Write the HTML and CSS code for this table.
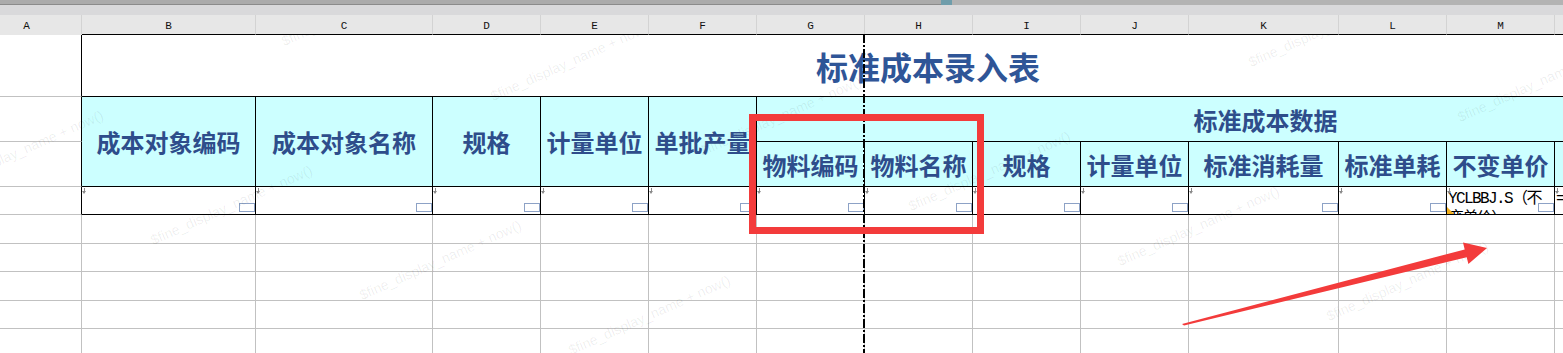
FILE: index.html
```html
<!DOCTYPE html>
<html lang="zh-CN">
<head>
    <meta charset="UTF-8">
    <title>标准成本录入表</title>
    <link rel="stylesheet" href="styles.css">
</head>
<body>
    <div class="sheet">
        <div class="topbar">
            <div class="track"></div>
            <div class="thumb"></div>
            <div class="track-rest"></div>
        </div>

        <div class="grid">
            <!-- column letters -->
            <div class="col-letter first">A</div>
            <div class="col-letter">B</div>
            <div class="col-letter">C</div>
            <div class="col-letter">D</div>
            <div class="col-letter">E</div>
            <div class="col-letter">F</div>
            <div class="col-letter">G</div>
            <div class="col-letter">H</div>
            <div class="col-letter">I</div>
            <div class="col-letter">J</div>
            <div class="col-letter">K</div>
            <div class="col-letter">L</div>
            <div class="col-letter">M</div>
            <div class="col-letter">N</div>
            <div class="col-letter">O</div>

            <!-- report title -->
            <div class="cell edge"></div>
            <div class="cell rpt title">标准成本录入表</div>

            <!-- header, first line -->
            <div class="cell edge"></div>
            <div class="cell rpt head tall">成本对象编码</div>
            <div class="cell rpt head tall">成本对象名称</div>
            <div class="cell rpt head tall">规格</div>
            <div class="cell rpt head tall">计量单位</div>
            <div class="cell rpt head tall">单批产量</div>
            <div class="cell rpt head group">标准成本数据</div>

            <!-- header, second line -->
            <div class="cell edge"></div>
            <div class="cell rpt head">物料编码</div>
            <div class="cell rpt head">物料名称</div>
            <div class="cell rpt head">规格</div>
            <div class="cell rpt head">计量单位</div>
            <div class="cell rpt head">标准消耗量</div>
            <div class="cell rpt head">标准单耗</div>
            <div class="cell rpt head">不变单价</div>
            <div class="cell rpt head"></div>
            <div class="cell rpt head"></div>

            <!-- input row -->
            <div class="cell edge"></div>
            <div class="cell rpt entry"><span class="box"></span></div>
            <div class="cell rpt entry"><span class="box"></span></div>
            <div class="cell rpt entry"><span class="box"></span></div>
            <div class="cell rpt entry"><span class="box"></span></div>
            <div class="cell rpt entry"><span class="box"></span></div>
            <div class="cell rpt entry"><span class="box"></span></div>
            <div class="cell rpt entry"><span class="box"></span></div>
            <div class="cell rpt entry"><span class="box"></span></div>
            <div class="cell rpt entry"><span class="box"></span></div>
            <div class="cell rpt entry"><span class="box"></span></div>
            <div class="cell rpt entry"><span class="box"></span></div>
            <div class="cell rpt entry">
                <div class="formula">YCLBBJ.S（不<br>变单价）</div>
                <span class="note"></span>
                <span class="box"></span>
            </div>
            <div class="cell rpt entry"><div class="formula">=YCLBBJ.S</div><span class="box"></span></div>
            <div class="cell rpt entry"><span class="box"></span></div>

            <!-- empty rows -->
            <div class="cell"></div><div class="cell"></div><div class="cell"></div><div class="cell"></div><div class="cell"></div>
            <div class="cell"></div><div class="cell"></div><div class="cell"></div><div class="cell"></div><div class="cell"></div>
            <div class="cell"></div><div class="cell"></div><div class="cell"></div><div class="cell"></div><div class="cell"></div>

            <div class="cell"></div><div class="cell"></div><div class="cell"></div><div class="cell"></div><div class="cell"></div>
            <div class="cell"></div><div class="cell"></div><div class="cell"></div><div class="cell"></div><div class="cell"></div>
            <div class="cell"></div><div class="cell"></div><div class="cell"></div><div class="cell"></div><div class="cell"></div>

            <div class="cell"></div><div class="cell"></div><div class="cell"></div><div class="cell"></div><div class="cell"></div>
            <div class="cell"></div><div class="cell"></div><div class="cell"></div><div class="cell"></div><div class="cell"></div>
            <div class="cell"></div><div class="cell"></div><div class="cell"></div><div class="cell"></div><div class="cell"></div>

            <div class="cell"></div><div class="cell"></div><div class="cell"></div><div class="cell"></div><div class="cell"></div>
            <div class="cell"></div><div class="cell"></div><div class="cell"></div><div class="cell"></div><div class="cell"></div>
            <div class="cell"></div><div class="cell"></div><div class="cell"></div><div class="cell"></div><div class="cell"></div>

            <div class="cell"></div><div class="cell"></div><div class="cell"></div><div class="cell"></div><div class="cell"></div>
            <div class="cell"></div><div class="cell"></div><div class="cell"></div><div class="cell"></div><div class="cell"></div>
            <div class="cell"></div><div class="cell"></div><div class="cell"></div><div class="cell"></div><div class="cell"></div>
        </div>

        <!-- watermark layer -->
        <div class="watermarks">
            <span class="wm" style="left:285px; top:0px">$fine_display_name + now()</span>
            <span class="wm" style="left:494px; top:55px">$fine_display_name + now()</span>
            <span class="wm" style="left:703px; top:110px">$fine_display_name + now()</span>
            <span class="wm" style="left:912px; top:165px">$fine_display_name + now()</span>
            <span class="wm" style="left:1121px; top:220px">$fine_display_name + now()</span>
            <span class="wm" style="left:1330px; top:275px">$fine_display_name + now()</span>
            <span class="wm" style="left:1539px; top:330px">$fine_display_name + now()</span>
            <span class="wm" style="left:-55px; top:144px">$fine_display_name + now()</span>
            <span class="wm" style="left:154px; top:199px">$fine_display_name + now()</span>
            <span class="wm" style="left:363px; top:254px">$fine_display_name + now()</span>
            <span class="wm" style="left:572px; top:309px">$fine_display_name + now()</span>
            <span class="wm" style="left:1252px; top:21px">$fine_display_name + now()</span>
            <span class="wm" style="left:1461px; top:76px">$fine_display_name + now()</span>
        </div>

        <div class="page-break"></div>
        <div class="mark-box"></div>
        <svg class="mark-arrow" width="1563" height="353" viewBox="0 0 1563 353">
            <polygon points="1182,324 1464.7,249.4 1463,242.6 1487,248 1468.4,264 1466.7,257.2 1184,325.5" fill="#f33b3b"/>
        </svg>
    </div>
</body>
</html>
```

FILE: styles.css
```css
* {
    box-sizing: border-box;
}
body {
    margin: 0;
    background-color: #fff;
    font-family: "Noto Sans CJK SC", sans-serif;
}
.sheet {
    position: relative;
    width: 1563px;
    height: 353px;
    overflow: hidden;
}

/* scroll strip above the column letters */
.topbar {
    display: flex;
    align-items: flex-start;
    height: 15px;
    background-color: #d9d9db;
}
.track {
    width: 941px;
    height: 5px;
    background-color: #ababab;
    border-bottom: 1px solid #8b8b8b;
}
.thumb {
    width: 11px;
    height: 5px;
    background-color: #6f9dab;
}
.track-rest {
    flex: 1;
    height: 5px;
    background-color: #b3b3b3;
}

.grid {
    display: grid;
    grid-template-columns: 82px 174px 177px 108px 108px 108px 108px 108px 108px 108px 150px 108px 108px 108px 112px;
    grid-template-rows: 20px 62px 45px 45px 28px 29px 28px 29px 28px 29px;
    width: max-content;
}
.col-letter {
    display: flex;
    align-items: center;
    justify-content: center;
    padding-top: 2px;
    background-color: #e7e7e7;
    border-right: 1px solid #d3d3d3;
    border-bottom: 1px solid #000;
    font-family: "Liberation Mono", monospace;
    font-size: 11px;
    color: #111;
}
.col-letter.first {
    padding-right: 28px;
    border-bottom-color: #e7e7e7;
}

.cell {
    position: relative;
    border-right: 1px solid #c1c1c1;
    border-bottom: 1px solid #c1c1c1;
}
.cell.edge {
    border-right-color: #000;
}
.cell.rpt {
    border-right-color: #000;
    border-bottom-color: #000;
}
.title {
    grid-column: span 14;
    display: flex;
    align-items: center;
    justify-content: center;
    font-size: 32px;
    font-weight: 700;
    color: #2f5597;
}
.head {
    display: flex;
    align-items: center;
    justify-content: center;
    background-color: #ccffff;
    font-size: 24px;
    font-weight: 700;
    color: #2e4d8b;
    white-space: nowrap;
    overflow: hidden;
}
.head.tall {
    grid-row: span 2;
}
.head.group {
    grid-column: span 9;
}

/* input cells: fill-down marker and editor box */
.entry {
    overflow: hidden;
}
.entry::before {
    content: "";
    position: absolute;
    left: 2px;
    top: 1px;
    width: 1px;
    height: 4px;
    background-color: #8a8a8a;
}
.entry::after {
    content: "";
    position: absolute;
    left: 0;
    top: 4px;
    border-left: 2.5px solid transparent;
    border-right: 2.5px solid transparent;
    border-top: 3px solid #8a8a8a;
}
.box {
    position: absolute;
    right: 0;
    bottom: 2px;
    width: 16px;
    height: 9px;
    border: 1px solid #8da2c6;
    background-color: #fff;
}
.formula {
    padding: 2px 0 0 1px;
    font-family: "Liberation Mono", "Noto Sans CJK SC", monospace;
    font-size: 16px;
    line-height: 20px;
    letter-spacing: -1.6px;
    color: #000;
    white-space: nowrap;
}
.note {
    position: absolute;
    left: 0;
    bottom: 0;
    width: 0;
    height: 0;
    border-bottom: 7px solid #f2b01e;
    border-right: 7px solid transparent;
}

.watermarks {
    position: absolute;
    left: 0;
    top: 34px;
    right: 0;
    bottom: 0;
    overflow: hidden;
    pointer-events: none;
}
.wm {
    position: absolute;
    font-family: "Liberation Sans", sans-serif;
    font-size: 14px;
    line-height: 14px;
    color: rgba(0, 0, 0, 0.07);
    white-space: nowrap;
    transform: rotate(-24deg);
    transform-origin: 0 100%;
}

/* frozen-pane divider */
.page-break {
    position: absolute;
    left: 863px;
    top: 34px;
    bottom: 0;
    width: 2px;
    background: repeating-linear-gradient(to bottom, #000 0 9px, transparent 9px 11px, #000 11px 13px, transparent 13px 15px);
}

/* red callouts */
.mark-box {
    position: absolute;
    left: 749px;
    top: 114px;
    width: 235px;
    height: 120px;
    border: 7px solid #f33b3b;
}
.mark-arrow {
    position: absolute;
    left: 0;
    top: 0;
}
```
